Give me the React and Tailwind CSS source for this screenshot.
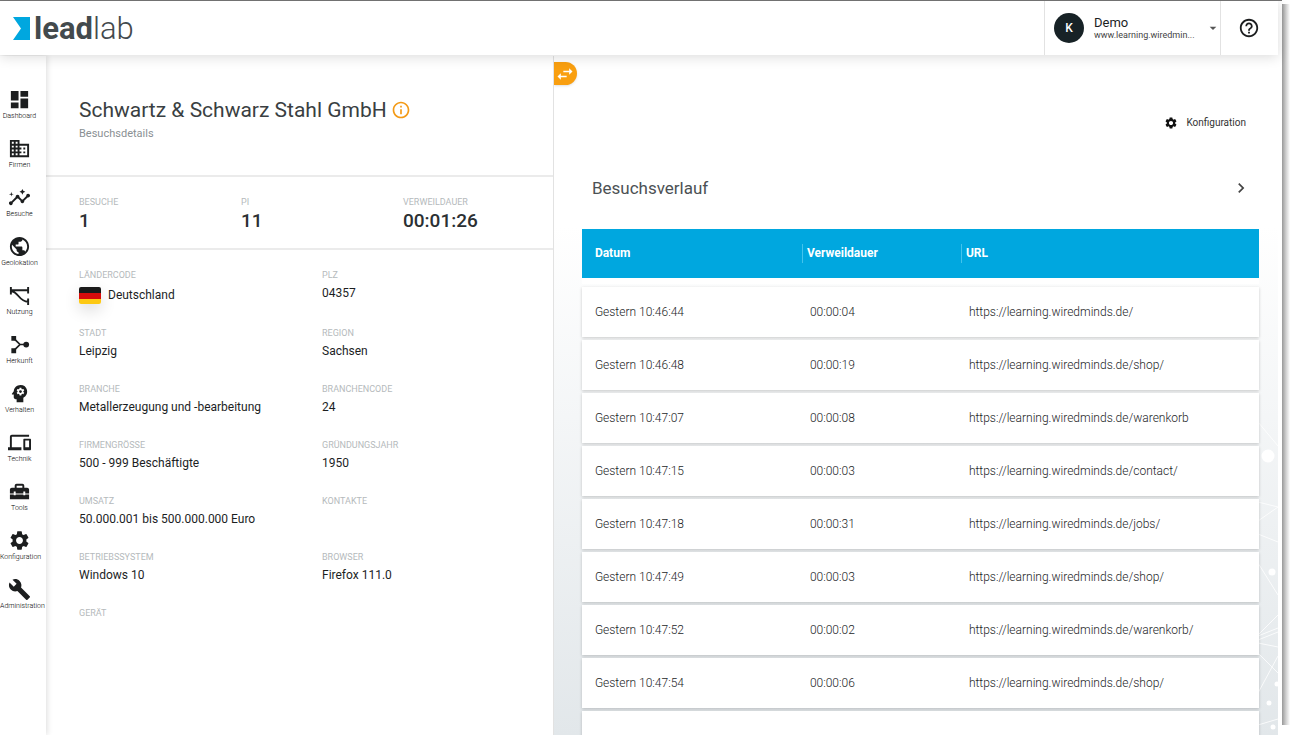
import React from "react";
import {
  MdArrowDropDown,
  MdBuild,
  MdChevronRight,
  MdDashboard,
  MdDevices,
  MdDomain,
  MdHelpOutline,
  MdHomeRepairService,
  MdInfoOutline,
  MdInsights,
  MdPsychology,
  MdPublic,
  MdSettings,
  MdSwapHoriz,
} from "react-icons/md";

function UsageIcon({ className }) {
  return (
    <svg viewBox="0 0 24 24" className={className} fill="none" stroke="currentColor" strokeWidth="2" aria-hidden="true">
      <path d="M3 3v8M21 3v7M21 15v7M3 6.500h18M3 7.500c8 0 8 11 18 11" />
    </svg>
  );
}

function OriginIcon({ className }) {
  return (
    <svg viewBox="0 0 24 24" className={className} fill="currentColor" aria-hidden="true">
      <path d="M3.500 3h5v5h-5zM3.500 16h5v5h-5z" />
      <circle cx="19" cy="12" r="3" />
      <path d="M6 5.500l6.500 6.500L6 18.500M12 12h7" fill="none" stroke="currentColor" strokeWidth="1.800" />
    </svg>
  );
}

const NAV = [
  { label: "Dashboard", Icon: MdDashboard },
  { label: "Firmen", Icon: MdDomain },
  { label: "Besuche", Icon: MdInsights },
  { label: "Geolokation", Icon: MdPublic },
  { label: "Nutzung", Icon: UsageIcon },
  { label: "Herkunft", Icon: OriginIcon },
  { label: "Verhalten", Icon: MdPsychology },
  { label: "Technik", Icon: MdDevices },
  { label: "Tools", Icon: MdHomeRepairService },
  { label: "Konfiguration", Icon: MdSettings },
  { label: "Administration", Icon: MdBuild },
];

const STATS = [
  ["Besuche", "1"],
  ["PI", "11"],
  ["Verweildauer", "00:01:26"],
];

const DETAILS = [
  ["Ländercode", "Deutschland"],
  ["PLZ", "04357"],
  ["Stadt", "Leipzig"],
  ["Region", "Sachsen"],
  ["Branche", "Metallerzeugung und -bearbeitung"],
  ["Branchencode", "24"],
  ["Firmengröße", "500 - 999 Beschäftigte"],
  ["Gründungsjahr", "1950"],
  ["Umsatz", "50.000.001 bis 500.000.000 Euro"],
  ["Kontakte", ""],
  ["Betriebssystem", "Windows 10"],
  ["Browser", "Firefox 111.0"],
  ["Gerät", ""],
];

const VISITS = [
  ["Gestern 10:46:44", "00:00:04", "https://learning.wiredminds.de/"],
  ["Gestern 10:46:48", "00:00:19", "https://learning.wiredminds.de/shop/"],
  ["Gestern 10:47:07", "00:00:08", "https://learning.wiredminds.de/warenkorb"],
  ["Gestern 10:47:15", "00:00:03", "https://learning.wiredminds.de/contact/"],
  ["Gestern 10:47:18", "00:00:31", "https://learning.wiredminds.de/jobs/"],
  ["Gestern 10:47:49", "00:00:03", "https://learning.wiredminds.de/shop/"],
  ["Gestern 10:47:52", "00:00:02", "https://learning.wiredminds.de/warenkorb/"],
  ["Gestern 10:47:54", "00:00:06", "https://learning.wiredminds.de/shop/"],
  ["", "", ""],
];

function Header() {
  return (
    <header className="relative z-20 mr-1 flex h-[54px] shrink-0 items-stretch bg-white shadow-[0_2px_12px_rgba(0,0,0,0.14)]">
      <a href="#" className="flex items-center gap-1 pl-[13px] text-[#434a4d]">
        <svg viewBox="0 0 17 23" className="h-[23px] w-[17px]" aria-hidden="true">
          <path d="M0 0H17V23H0L8 11.500Z" fill="#00a7df" />
        </svg>
        <span className="text-[31px] leading-none">
          <b className="font-bold">lead</b>
          <span className="font-light">lab</span>
        </span>
      </a>
      <div className="flex-1" />
      <button type="button" className="flex w-[177px] items-center gap-[10px] border-x border-[#e2e2e2] pl-[9px] text-left">
        <span className="flex size-[30px] shrink-0 items-center justify-center rounded-full bg-[#172226] text-[12px] font-medium text-white">
          K
        </span>
        <span className="flex w-[104px] flex-col">
          <span className="text-[13px] leading-[14px]">Demo</span>
          <span className="text-[9px] leading-[11px] whitespace-nowrap text-[#444]">www.learning.wiredmin...</span>
        </span>
        <MdArrowDropDown className="size-4 shrink-0 text-[#555]" />
      </button>
      <button type="button" aria-label="Hilfe" className="flex w-[57px] items-center justify-center pr-[2px]">
        <MdHelpOutline className="size-[22px]" />
      </button>
    </header>
  );
}

function Sidebar() {
  return (
    <nav className="relative z-10 w-[46px] shrink-0 bg-white pt-8 shadow-[1px_0_6px_rgba(0,0,0,0.14)]">
      <ul className="w-[39px]">
        {NAV.map(({ label, Icon }) => (
          <li key={label}>
            <a href="#" className="flex h-[49px] flex-col items-center-safe">
              <Icon className="size-[23px] shrink-0" />
              <span className="text-[7px] leading-[11px] font-light whitespace-nowrap text-black">{label}</span>
            </a>
          </li>
        ))}
      </ul>
    </nav>
  );
}

function Flag() {
  return (
    <span className="block h-[17px] w-[22px] overflow-hidden rounded-[2px] shadow-[0_6px_16px_rgba(0,0,0,0.14)]">
      <svg viewBox="0 0 22 17" className="block h-full w-full" aria-hidden="true">
        <path d="M0 0h22v6H0z" fill="#1a1a1a" />
        <path d="M0 6h22v6H0z" fill="#d80c0c" />
        <path d="M0 12h22v5H0z" fill="#fdc913" />
      </svg>
    </span>
  );
}

function CompanyPanel() {
  return (
    <section className="flex min-w-0 flex-[7] flex-col bg-white">
      <div className="h-[121px] border-b-2 border-[#ebebeb] pt-10 pl-[33px]">
        <div className="flex items-center gap-1">
          <h1 className="text-[21px] leading-[28px] whitespace-nowrap text-[#3a3f42]">Schwartz &amp; Schwarz Stahl GmbH</h1>
          <button type="button" aria-label="Information" className="text-[#f39a16]">
            <MdInfoOutline className="size-5" />
          </button>
        </div>
        <p className="pt-[3px] text-[11px] leading-[14px] text-[#8a9093]">Besuchsdetails</p>
      </div>
      <dl className="grid h-[73px] grid-cols-[162px_162px_auto] border-b-2 border-[#ebebeb] pt-[19px] pl-[33px]">
        {STATS.map(([label, value]) => (
          <div key={label}>
            <dt className="text-[9px] leading-[12px] text-[#b5babc] uppercase">{label}</dt>
            <dd className="text-[19px] leading-[26px] font-medium text-[#2b3033]">{value}</dd>
          </div>
        ))}
      </dl>
      <dl className="grid grid-cols-[243px_auto] pt-[19px] pl-[33px]">
        {DETAILS.map(([label, value]) => (
          <div key={label} className="min-h-14">
            <dt className="text-[9px] leading-[12px] text-[#b5babc] uppercase">{label}</dt>
            {label === "Ländercode" ? (
              <dd className="flex items-center gap-[7px] pt-1 pb-[21px] text-[12px] leading-[21px]">
                <Flag />
                {value}
              </dd>
            ) : (
              <dd className="pt-[3px] text-[12px] leading-[18px]">{value}</dd>
            )}
          </div>
        ))}
      </dl>
    </section>
  );
}

function Network() {
  return (
    <svg viewBox="0 0 20 335" className="absolute right-0 bottom-0 h-[335px] w-5" aria-hidden="true">
      <g stroke="#fff" strokeWidth="1" fill="none" opacity="0.8">
        <path d="M0 22L20 46M0 102L20 107L0 121M0 134L20 142M0 163L20 195M0 235L20 215M0 236L20 228M0 240L20 232M0 243L20 247M0 253L20 273M0 293L20 256M0 325L20 319" />
      </g>
      <g fill="#fff">
        <circle cx="10" cy="56" r="6.500" />
        <circle cx="14" cy="172" r="3.500" />
        <circle cx="19" cy="284" r="2.500" />
        <circle cx="11" cy="303" r="2.500" />
        <circle cx="15" cy="327" r="2.500" />
      </g>
    </svg>
  );
}

function VisitsPanel() {
  return (
    <main className="relative mr-1 min-w-0 flex-[10] overflow-hidden border-l border-[#e2e2e2] bg-linear-to-b from-white from-25% to-[#e2e7ea]">
      <Network />
      <button
        type="button"
        aria-label="Ansicht wechseln"
        className="absolute top-[6px] left-0 flex h-[23px] w-[23px] items-center justify-center rounded-r-full bg-[#f99f10] text-white shadow-sm"
      >
        <MdSwapHoriz className="size-5" />
      </button>
      <div className="relative pr-[19px] pl-7">
        <div className="flex justify-end pt-[58px] pr-[13px]">
          <button type="button" className="flex items-center gap-2 text-[10px] leading-[18px] text-[#333]">
            <MdSettings className="size-[14px] text-[#111]" />
            Konfiguration
          </button>
        </div>
        <div className="flex items-center justify-between pt-11 pr-2 pb-[29px] pl-[10px]">
          <h2 className="text-[17px] leading-[24px] text-[#4c5154]">Besuchsverlauf</h2>
          <button type="button" aria-label="Weiter">
            <MdChevronRight className="size-5 text-[#444]" />
          </button>
        </div>
        <table className="-mt-[3px] w-full table-fixed border-separate border-spacing-x-0 border-spacing-y-[3px] text-left">
          <thead>
            <tr>
              {["Datum", "Verweildauer", "URL"].map((name, i) => (
                <th
                  key={name}
                  scope="col"
                  className={
                    "h-[55px] border-b-[6px] border-white bg-[#00a7df] bg-clip-padding text-[12px] font-bold text-white " +
                    ["w-[215px] pl-[13px]", "w-[159px] pl-[5px]", "pl-[5px]"][i]
                  }
                >
                  <span className={i ? "block border-l border-[#43c3ec] pl-1 leading-[19px]" : "block leading-[19px]"}>
                    {name}
                  </span>
                </th>
              ))}
            </tr>
          </thead>
          <tbody>
            {VISITS.map((row, i) => (
              <tr key={i} className="bg-white shadow-[0_1px_3px_rgba(0,0,0,0.2)]">
                {row.map((cell, j) => (
                  <td key={j} className="h-[50px] pl-[13px] text-[12px] font-light whitespace-nowrap text-[#1c1e1f]">
                    {cell}
                  </td>
                ))}
              </tr>
            ))}
          </tbody>
        </table>
      </div>
    </main>
  );
}

export default function App() {
  return (
    <div className="flex h-screen overflow-hidden bg-white font-[Roboto,'Liberation_Sans',sans-serif] text-[#1c1e1f]">
      <div className="flex min-w-0 flex-1 flex-col border-t border-[#777]">
        <Header />
        <div className="flex min-h-0 flex-1 pt-px">
          <Sidebar />
          <CompanyPanel />
          <VisitsPanel />
        </div>
      </div>
      <div className="w-[13px] shrink-0 pt-1 pb-[10px]">
        <div className="h-full w-2 bg-linear-to-r from-[#999] via-[#d0d0d0] to-white" />
      </div>
    </div>
  );
}
